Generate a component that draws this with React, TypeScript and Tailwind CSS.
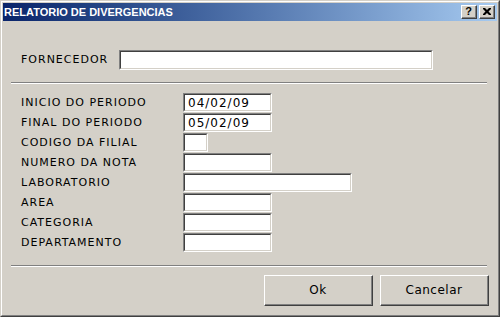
import React from 'react';

// Campos do formulario: label + largura do input
const fields: { label: string; width: string; value?: string }[] = [
    { label: 'INICIO DO PERIODO', width: 'w-[89px]', value: '04/02/09' },
    { label: 'FINAL DO PERIODO', width: 'w-[89px]', value: '05/02/09' },
    { label: 'CODIGO DA FILIAL', width: 'w-[25px]' },
    { label: 'NUMERO DA NOTA', width: 'w-[89px]' },
    { label: 'LABORATORIO', width: 'w-[169px]' },
    { label: 'AREA', width: 'w-[89px]' },
    { label: 'CATEGORIA', width: 'w-[89px]' },
    { label: 'DEPARTAMENTO', width: 'w-[89px]' },
];

const font = "font-['DejaVu_Sans',Verdana,sans-serif]";

// Input "afundado" estilo Win2000
const SunkenInput = ({ width, value }: { width: string; value?: string }) => (
    <div className={`${width} h-full border-t border-l border-t-[#808080] border-l-[#808080] border-b border-r border-b-white border-r-white`}>
        <div className="h-full border-t border-l border-t-[#404040] border-l-[#404040] border-b border-r border-b-[#d4d0c8] border-r-[#d4d0c8] bg-white flex items-center pl-[3px]">
            <span className={`${font} text-[12px] tracking-[1px] text-black leading-none`}>{value}</span>
        </div>
    </div>
);

const Separator = () => (
    <div className="ml-[8px] w-[476px] border-t border-t-[#808080] border-b border-b-white" />
);

const Button = ({ children }: { children: React.ReactNode }) => (
    <div className="w-[109px] h-[31px] border-t border-l border-t-white border-l-white border-b border-r border-b-[#404040] border-r-[#404040]">
        <div className="h-full border-b border-r border-b-[#808080] border-r-[#808080] flex items-center justify-center">
            <span className={`${font} text-[12px] tracking-[0.5px] text-black`}>{children}</span>
        </div>
    </div>
);

const TitleButton = ({ children }: { children: React.ReactNode }) => (
    <div className="w-[16px] h-[14px] bg-[#d4d0c8] border-t border-l border-t-white border-l-white border-b border-r border-b-[#404040] border-r-[#404040]">
        <div className="h-full border-b border-r border-b-[#808080] border-r-[#808080] flex items-center justify-center">
            {children}
        </div>
    </div>
);

export default function App() {
    return (
        <div className="w-[500px] h-[317px] bg-[#d4d0c8] border-t border-l border-t-[#d4d0c8] border-l-[#d4d0c8] border-b border-r border-b-[#404040] border-r-[#404040]">
            <div className="h-full border-t border-l border-t-white border-l-white border-b border-r border-b-[#808080] border-r-[#808080] p-px flex flex-col">
                {/* title bar */}
                <div className="h-[18px] bg-gradient-to-r from-[#0a246a] to-[#a6caf0] flex items-center pl-[1px] pr-[2px]">
                    <span className="font-['Liberation_Sans',Arial,sans-serif] font-bold text-[11px] text-white">
                        RELATORIO DE DIVERGENCIAS
                    </span>
                    <div className="ml-auto flex gap-[2px]">
                        <TitleButton>
                            <span className="font-['Liberation_Sans',Arial,sans-serif] font-bold text-[11px] leading-none text-black">?</span>
                        </TitleButton>
                        <TitleButton>
                            <svg width="8" height="7" viewBox="0 0 8 7">
                                <path d="M0 0h2l2 2 2-2h2v1l-2.5 2.5L8 6v1H6L4 5 2 7H0V6l2.5-2.5L0 1z" fill="#000" />
                            </svg>
                        </TitleButton>
                    </div>
                </div>

                {/* fornecedor */}
                <div className="mt-[29px] h-[20px] flex items-center pl-[18px]">
                    <span className={`${font} text-[11px] tracking-[1px] text-black w-[98px]`}>FORNECEDOR</span>
                    <SunkenInput width="w-[314px]" />
                </div>

                <div className="mt-[12px]"><Separator /></div>

                {/* campos */}
                <div className="mt-[9px] flex flex-col pl-[18px]">
                    {fields.map((f) => (
                        <div key={f.label} className="h-[20px] flex items-start">
                            <span className={`${font} text-[11px] tracking-[1px] text-black w-[162px] leading-[19px]`}>{f.label}</span>
                            <div className="h-[19px]">
                                <SunkenInput width={f.width} value={f.value} />
                            </div>
                        </div>
                    ))}
                </div>

                <div className="mt-[12px]"><Separator /></div>

                {/* botoes */}
                <div className="mt-[8px] flex justify-end gap-[7px] pr-[8px]">
                    <Button>Ok</Button>
                    <Button>Cancelar</Button>
                </div>
            </div>
        </div>
    );
}
